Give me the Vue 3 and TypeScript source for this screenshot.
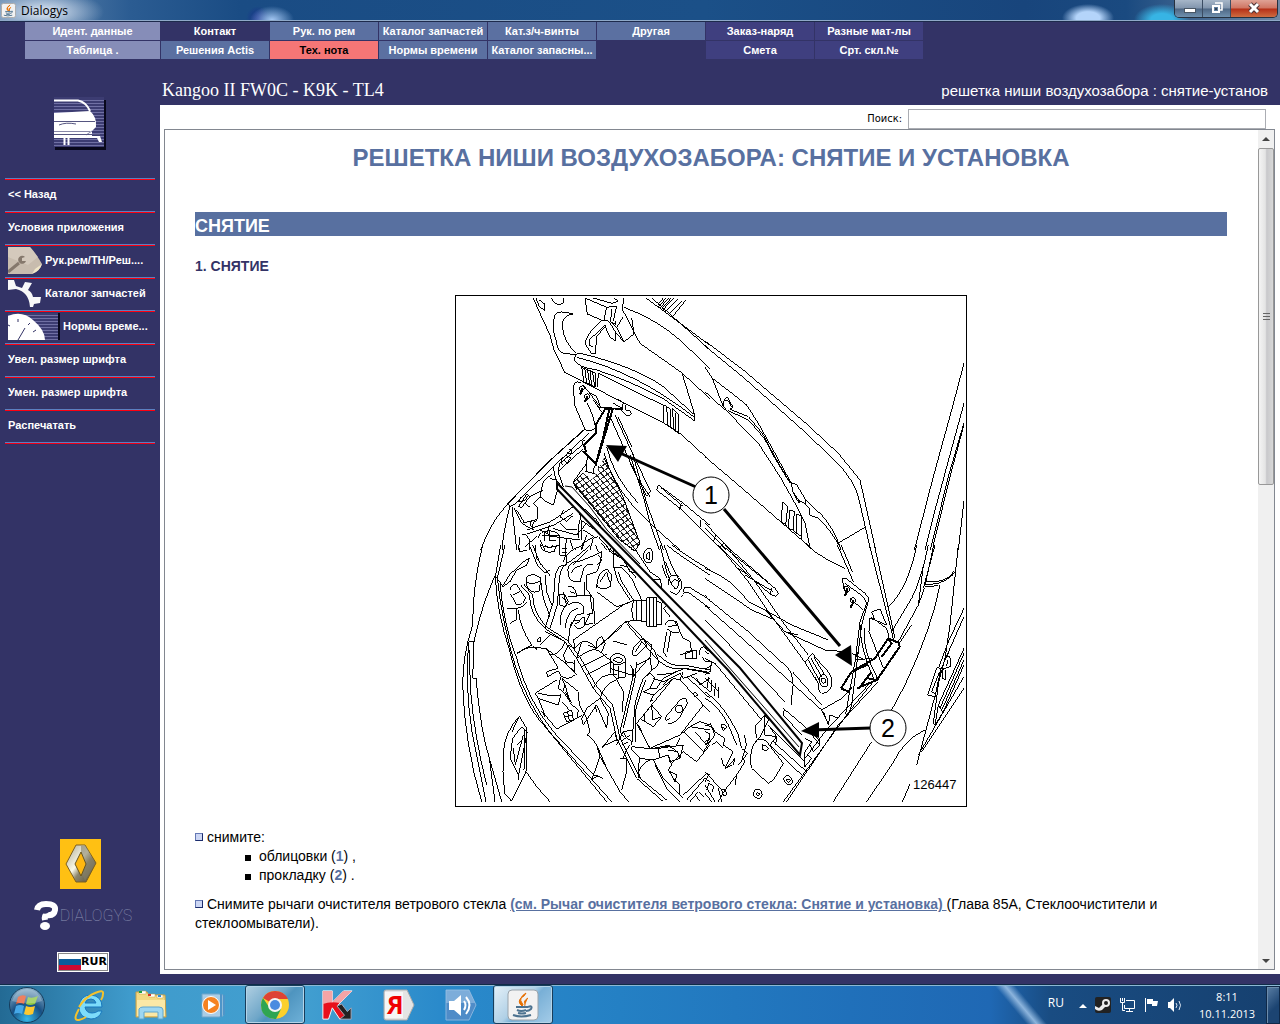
<script setup lang="ts">
import { ref } from 'vue'

interface Tab {
  label: string
  tone: 'pale' | 'navy' | 'steel' | 'alert' | 'indigo' | 'none'
}

interface Tile {
  x: number
  y: number
  thin: string[]
  bold: string[]
}

const tabs: Tab[] = [
  { label: 'Идент. данные', tone: 'pale' },
  { label: 'Контакт', tone: 'navy' },
  { label: 'Рук. по рем', tone: 'steel' },
  { label: 'Каталог запчастей', tone: 'steel' },
  { label: 'Кат.з/ч-винты', tone: 'steel' },
  { label: 'Другая', tone: 'steel' },
  { label: 'Заказ-наряд', tone: 'indigo' },
  { label: 'Разные мат-лы', tone: 'indigo' },
  { label: 'Таблица .', tone: 'pale' },
  { label: 'Решения Actis', tone: 'steel' },
  { label: 'Тех. нота', tone: 'alert' },
  { label: 'Нормы времени', tone: 'steel' },
  { label: 'Каталог запасны...', tone: 'steel' },
  { label: '', tone: 'none' },
  { label: 'Смета', tone: 'indigo' },
  { label: 'Срт. скл.№', tone: 'indigo' },
]

const menu: { label: string; icon?: 'wrench' | 'gear' | 'gauge' }[] = [
  { label: '<< Назад' },
  { label: 'Условия приложения' },
  { label: 'Рук.рем/ТН/Реш....', icon: 'wrench' },
  { label: 'Каталог запчастей', icon: 'gear' },
  { label: 'Нормы време...', icon: 'gauge' },
  { label: 'Увел. размер шрифта' },
  { label: 'Умен. размер шрифта' },
  { label: 'Распечатать' },
]

const query = ref('')

/* Line drawing, split in tiles; path units are a third of a pixel. */
const tiles: Tile[] = [
  {
    x: -5,
    y: -5,
    thin: [
      'M250 24L272 75L300 135L312 180L345 248L362 256L500 328L640 398L690 430L780 512',
      'M258 24L268 50L285 62L284 42L268 30M305 24Q312 44 330 44Q344 40 342 24',
      'M368 72Q325 58 315 75Q303 110 318 150Q322 185 340 190L378 194M368 72Q338 76 337 105Q338 155 380 190',
      'M375 212Q370 190 392 190Q560 232 640 290L735 376L733 392L640 326Q540 272 440 240Q380 230 375 212M380 202Q560 246 733 382',
      'M445 250L640 346L640 398M445 250L442 292M697 252L735 378M395 232L402 276M404 233L410 280M412 236L419 284M420 240L425 288M428 246L434 290L402 276M395 232L438 250L438 292',
      'M642 345L642 400M650 350L654 408M660 355L662 414M667 356L672 420M678 368L678 422M686 374L687 430M642 345L660 356M667 356L686 374M654 408L687 430',
      'M405 24L412 72L458 92M405 24L470 52L500 48M430 24L485 40L505 34L492 24M470 52L462 90M485 56L482 95L498 104L498 94M412 72L432 80M500 48L490 92',
      'M520 24L518 60L570 160L695 248L780 326M522 52Q620 88 690 150L780 236M520 80L500 112L522 156L552 132L545 84M500 112L484 98',
      'M456 90Q410 130 405 160L424 190L436 192L440 140L468 106M466 104L420 148L418 166L430 172M456 90L475 92L498 128L496 152L480 142L464 106M498 128L522 156',
      'M588 24L780 166M606 24L780 180M640 24L622 46M656 24L630 54M672 24L638 60M684 28L646 66M696 32L656 72M708 30L668 80M648 24L626 50M664 24L634 58',
      'M392 278Q374 270 370 290L374 345L405 418Q420 430 437 412L428 376L412 340M400 286L416 306L452 352L518 356L490 340M416 306L440 320L452 352M430 330L455 366',
      'M500 326L520 338L514 362L530 378Q548 376 542 364L528 360L528 344M440 350L520 360',
      'M405 418L300 512L172 640L180 650L192 644M418 428L310 530L192 644M398 422L290 520L168 648M405 450Q394 450 398 464L330 520L324 545L400 476M340 500Q326 520 340 526M350 488L362 492L366 480L356 478M340 510L352 518L362 504L348 496',
      'M310 530L316 565L342 600M324 545L340 590M280 574L270 620Q290 640 310 645L322 602M280 574L306 552M300 566L318 570L322 602',
      'M168 648Q120 700 92 780M180 650Q160 720 156 780M186 652L200 780M192 654L215 700L250 720M205 650L230 612L240 620L215 652ZM240 620L280 600M215 700L262 688L262 652L250 640L270 620M226 640L240 652M214 620L206 636L224 632L236 614',
      'M438 524Q426 535 432 550Q440 560 448 545L446 528M412 500L408 545L432 550M410 520L370 575L380 600',
      'M462 490Q490 600 600 700L690 780M470 470Q490 560 565 640M480 380L520 470L560 560L600 620M495 375L552 500L602 605L590 618L540 520M505 382L545 470M540 495L580 620L600 700L628 780M548 492L590 640L640 780M536 466L550 496',
      'M625 585L700 640L780 706M620 600L690 655L770 735M625 585L620 600M632 592L700 650M694 640L688 660M752 690L750 712',
      'M250 720Q240 700 262 690M230 720L300 696L370 650L388 660L392 690L430 716M230 732L310 706L370 670M300 706Q280 740 312 740L390 750M310 716L380 735L410 700M388 690L384 745M394 690L394 750M270 720L300 735M265 745Q268 722 300 722Q330 726 330 748L330 780M270 750L285 780M275 738H330M284 722V752M300 722V752H318M270 764Q300 780 330 764',
      'M215 735Q228 728 238 750L240 780M225 770L260 740M350 745L345 780M360 750L370 780M430 745L420 780M430 745L445 740L480 780M400 720L432 740L398 760L394 780M340 600L440 690L500 780M410 735L395 780M250 690L240 700L245 712',
      'M200 660L225 700M210 740L205 780M340 660L330 680L350 694L370 676M455 760L470 780M380 770L376 780M330 700L350 720L380 718',
      'M390 290Q398 284 404 292Q402 304 394 304Q388 300 390 290ZM404 314Q412 308 420 316Q418 330 408 328Q400 322 404 314Z',
    ],
    bold: [
      'M465 358L437 405L438 428L402 464L408 484L402 486L438 522L488 358ZM478 358L460 440L438 520',
      'M396 294V302L390 314M412 318V326L403 336',
    ],
  },
  {
    x: 250,
    y: -5,
    thin: [
      'M0 153L115 240L305 402L400 490L465 570L512 780M0 168L115 262L302 428L400 522Q445 570 460 620L497 780',
      'M0 232L22 265L55 350L110 410L160 460L225 560L270 640L300 700L314 770M22 265L75 305L125 345L160 400L210 490L258 578',
      'M55 350Q55 322 68 322L84 352L76 356M60 330Q72 330 80 352M76 358L130 380L172 430L205 492L256 580M70 362L130 390L178 445L208 502L250 572',
      'M258 578L275 584L302 630L300 640L282 632L264 606ZM264 606L282 640M302 630L350 675Q390 720 408 780M300 640L312 655L314 676L340 684Q385 730 400 765M282 632L284 640',
      'M402 758L480 712M0 305L60 360M0 500L115 598L230 698L325 780M233 636L228 696L242 704L248 650ZM254 660L250 716L264 720L268 664ZM276 672L274 730L288 738L290 680ZM242 704L250 716M264 720L274 730M288 738L292 752L312 768',
      'M777 220L740 360L685 560L628 780M777 340L690 660L660 780M777 398L730 560L676 780M777 404L735 560L684 770M777 632L760 780',
      'M0 700L78 780M0 714L64 780M0 728L52 780M32 736L26 752M60 758L46 770',
    ],
    bold: [],
  },
  {
    x: -5,
    y: 250,
    thin: [
      'M98 0Q68 120 68 240Q38 330 38 420Q44 600 95 770M135 92Q95 180 72 290L56 290Q44 420 66 560L108 770M72 290L68 400L78 400Q92 560 118 640L155 770M118 640L135 770M56 290L62 440Q74 580 110 720',
      'M152 0L136 95Q140 200 180 320Q215 470 285 545L470 770M165 0L142 100Q156 230 195 360Q235 480 300 562L485 770M150 112Q160 240 200 340Q235 470 310 560L432 690L460 700M136 95L150 110L158 125',
      'M160 620Q165 560 208 514L230 550L228 680L184 768L164 745Q156 680 160 620M180 640L188 580L215 545L232 560L206 690ZM190 610L196 660L220 570M200 600L212 590M228 680Q260 730 300 770M205 520L186 560M206 690L206 704M224 556L222 676',
      'M158 125L180 110L200 75L230 60L238 40L220 50L178 90L160 120M205 0L210 20L230 16M180 134Q184 114 200 120L226 158Q222 182 200 180L182 148M190 150L210 140M178 190Q215 195 232 170M170 190L200 192L198 225L180 235M205 195Q210 250 245 300L200 325',
      'M230 96Q250 80 272 100L268 138Q240 150 230 120ZM230 112Q250 120 270 108M238 0L262 60L285 85L300 75M248 0L272 60M255 0L260 40L300 92M212 120L238 150Q240 210 285 250L345 290L380 340L430 430L480 490L500 580L540 660L560 700L640 770M220 116L248 150Q250 205 290 246L352 286L392 340L440 425L488 480L510 580L548 655L570 700L650 765',
      'M270 95L280 160L300 215M285 90L290 140L305 180M270 0Q280 28 312 20L320 0M285 0Q300 16 310 0M330 0L330 30L350 34M345 0L350 60M335 12H350M335 22H350M350 60Q320 55 315 100L310 170L285 250M360 50Q335 55 328 100L322 180L300 250M400 0Q345 20 340 50M420 0Q400 20 360 50M415 14L370 58',
      'M355 90Q345 50 390 48Q440 30 455 20Q452 60 440 80L410 90L408 130L430 160L434 236M355 90Q360 115 390 110L400 75Q405 55 430 58M365 85Q368 65 395 62M445 30L455 45L440 60M328 150H345L355 170L345 185L330 180ZM340 140L350 182M336 156L350 170M355 125Q375 120 380 152H405V110M360 140L375 145M355 155L420 150L428 205L410 208',
      'M330 240Q328 180 372 172Q400 172 402 190L402 205L380 210L360 250L355 290M345 250Q350 195 385 190M362 245Q360 225 390 225L402 215L405 238L430 236M372 240Q380 256 400 246L420 208M376 236L390 230M370 285L520 180L545 168L590 168M370 285L375 310L395 290Q420 285 440 310L520 235M380 340L395 290M550 168L545 195L550 225L590 230M520 235L550 225M560 168V226M576 168V228',
      'M590 158H620V244H590ZM600 158V244M612 158V244M620 168L635 175V238L620 240M635 175L650 150M436 0L445 20M440 130Q440 80 470 72L486 90L480 125Q450 140 440 120M450 110L470 80L478 110M440 140L500 185L540 172M490 0L492 70L505 110L540 165M492 68H515L545 100L575 165M505 80L515 110L550 165M510 60L530 65L560 100M470 0L480 20L520 44L540 80L575 85M480 10Q500 40 525 30',
      'M580 40Q580 10 600 10Q614 20 605 50Q590 60 580 40M588 38Q590 22 600 22L598 46ZM550 0L560 20L600 80L630 100M540 0L545 16M630 0L650 80L665 120M642 0L664 60L690 110M636 60L650 100M646 50L662 90M656 120Q650 88 680 90Q700 105 694 130L680 150L660 140M664 116Q668 98 684 108Q690 125 676 132ZM650 0Q700 40 780 90M665 0Q720 40 780 75M700 140Q700 120 720 128L780 165M695 155Q700 140 715 142L780 190M610 102L632 104L636 140',
      'M640 190L660 215M645 240Q650 220 680 230L690 260Q670 270 650 250M655 245L680 240L670 225M650 260L640 320L650 335M662 262L652 320M690 260L700 280L720 290L725 320L690 330M640 190L650 180L664 190M705 340L708 320L740 315L740 340ZM728 315V340M750 330Q745 310 760 305L780 315M756 335L766 350L780 350M765 320L776 326',
      'M440 310Q435 280 455 275L466 295L455 320M520 235L530 228L620 325Q660 370 700 360L780 375M515 245L440 310M530 236L610 330Q650 380 700 370L780 385M490 288L532 300M548 330Q540 310 580 280L590 300L560 332ZM556 320L576 290M580 282L605 300L600 335L545 400',
      'M380 340L395 330Q430 305 450 320L485 350M395 365L470 328M410 390L480 352M430 430Q450 380 500 390M450 460Q460 420 500 404L520 440L518 500M375 310L355 300M415 300L440 312M480 345Q482 326 505 326Q528 330 528 348L525 396L500 400L482 385ZM482 350Q500 368 528 350M490 356L490 390M505 362V398M490 345Q500 330 520 345Q508 360 490 345',
      'M548 370L548 400L510 560L520 575M560 350L555 400L520 550M540 360Q560 380 548 400M480 370L545 390M560 360L600 340L605 375L580 400M605 375Q640 360 615 325M580 400Q560 450 555 480L545 600M588 405Q565 460 556 500L556 590M580 400L600 385L615 400L600 430L580 440',
      'M200 328Q230 295 290 312L325 370L290 380L292 395L325 378L332 390M290 312Q340 345 380 390M262 284Q258 292 270 290Q276 280 270 275ZM285 260L345 290Q330 330 300 330M270 300L300 270M355 300L340 330L350 360L375 380L372 345M345 350L375 355M330 390Q350 410 375 390M332 395L325 430L338 440L345 420L336 400L385 440L388 480L410 520M345 420L360 470L340 440',
      'M320 405L255 445L265 460L325 480L332 450L300 452L265 445M265 460L285 510L320 552L395 512M285 515L275 498M340 505L365 495L370 525L350 530ZM345 515L365 510M352 498L358 528M360 475L385 495L382 515M250 305Q260 310 262 316M335 470L358 495M345 440L365 475',
      'M400 540L395 520L410 490L450 460L475 505L470 550L440 480L400 540M410 520L420 560L412 570L425 580L440 600L450 635L425 705M435 480L440 500M455 610L495 560L500 585L455 605M450 635L490 705L510 740L535 770M425 705L445 690M510 640L528 640L530 680L515 735M500 600L520 560L545 555M520 640Q530 610 540 600M440 600L470 670',
      'M560 535L670 400L690 405L760 480L690 570L600 610ZM660 520Q640 535 648 515L690 465Q710 450 712 475L690 515Q670 540 655 535M675 495Q678 480 690 480Q702 485 696 500Q685 508 675 495M585 505L605 480L635 515L610 545L585 530ZM605 480L608 525L635 515M570 520L585 530M565 540L600 612L660 600M580 440L610 450L670 400M610 450L600 470L610 465M600 430L620 430L640 400L680 380',
      'M620 390L665 385L705 370L770 380M610 400L640 410L690 385L700 400L740 385M640 420L660 400M690 405L700 380M735 440Q725 445 735 455L745 450ZM710 395L780 460M720 390L780 440M740 400L750 420L780 400M760 480L780 500M690 570L720 545L780 555M700 560L760 620L780 590M720 545L750 530L780 540M735 560L770 600L780 570M690 580L680 600',
      'M545 605L610 612L700 600L690 640L660 650L655 630L610 645L570 640L545 615ZM570 640Q560 680 572 700M600 645L590 650Q560 670 565 700M610 645L640 700L700 760M615 660L650 730L690 770M630 640L625 612M640 605Q680 600 690 640M655 615L685 620M655 630L665 660L655 675L670 700L690 720L690 750M665 655L700 620L740 650L780 600M660 680L680 690L675 710ZM700 750L770 685L780 690M710 765L765 700L780 710M720 770L745 740L760 755M735 750L750 768M520 560L530 580L548 590M512 590L540 570M515 600L535 590',
    ],
    bold: [],
  },
  {
    x: 250,
    y: 250,
    thin: [
      'M0 70Q80 100 130 170L180 195L240 260L360 315L420 320M0 100Q90 160 140 195L210 225M180 195L260 240L370 285M240 260L280 270M0 155L130 260L250 370Q270 400 262 440L258 480M0 182L100 270L350 495L410 460M262 380L350 480',
      'M50 0L210 130L220 145L212 154L196 148L130 90L80 40L42 4M60 0L190 112M120 90L205 140M200 128L196 146M40 0L130 110L190 200L300 352M70 10L150 110L240 240L310 330M305 0Q350 40 420 70M80 28L100 40M100 70L130 90',
      'M300 352L322 325L355 365Q385 390 380 420Q375 445 350 445Q338 435 340 415ZM310 345L342 405M318 340L350 395M326 335L358 388M342 405Q345 385 360 390Q375 405 365 425Q348 430 342 405M350 400Q362 396 362 412Q350 422 350 400M335 405L330 395',
      'M397 0L445 110M408 0L442 80M493 0L560 260L565 285M508 0L570 280M412 100L416 130L425 140M412 100L425 102L480 145L492 160L470 240L440 480L430 510L422 508L450 350L465 230L485 175L475 155L420 115M435 160L475 195M468 240Q460 300 510 410M478 250Q470 310 518 402M440 325L480 345M458 320L450 345L500 340',
      'M500 200L525 192L545 240L510 225ZM510 225L495 220L492 260L535 370M498 216L545 250L552 275M635 0Q610 130 550 185M670 0Q650 100 620 160L560 260M686 0Q665 100 660 120L700 115Q740 100 750 80M660 108Q720 120 748 78M620 240L580 300M655 60L640 180L580 290M690 0L655 130',
      'M705 120Q680 250 600 420L560 495M760 0L735 240L720 340L635 660M660 125L700 122M777 190L730 290L700 370M777 215L735 310L705 380L685 535M777 310L700 480L690 540L685 535M777 325L705 490M777 345L712 492M777 360L715 500L690 540M700 480L712 500M777 395L640 630M777 430L650 620',
      'M708 370L695 368L668 450L690 455ZM702 385L680 440L690 446M722 340Q740 320 736 365L718 370M715 370Q705 400 720 405L722 375M728 345L725 362M730 320L728 335M658 130L640 180',
      'M505 410L440 490L235 770M518 412L400 540L245 770M490 420L360 560L300 640M400 520L375 510L370 540L355 500M410 460L430 440M350 495L372 540M500 590L385 770M660 555Q600 580 560 660L485 770M625 695L592 770M560 495L550 510',
      'M0 340L20 350L15 380L0 390M0 310L20 325M20 350L30 355L170 525M0 400L40 440M0 440Q60 480 100 570L110 610M0 460Q40 480 70 540L95 600M10 395L8 430M20 405L18 440M32 415L28 452M42 425L40 460M0 372L18 362',
      'M0 540L20 545L30 570L15 590L0 600M0 560L12 565L14 582L0 590M15 535L30 560L60 580L55 600L85 620L60 670L80 660M20 600L35 590L55 610M50 640L55 660L66 668L90 640L85 660M48 540Q56 532 64 545Q64 556 54 556ZM52 546L60 550M118 570L124 600L112 640L120 650L95 690L60 735L40 770M110 610L128 625L100 660M50 735Q66 730 64 750Q54 760 50 735',
      'M0 680L50 735M10 690L0 710M5 735L12 715L28 725L20 742M0 745L20 770M0 720L30 770M40 730L50 770M95 690L90 720M150 545L180 510L190 525L165 575M150 545L155 580M165 575L145 600Q130 640 140 670L190 715L205 705L235 655L185 590Q165 575 150 590M172 600Q182 596 190 610Q182 622 172 612ZM190 540L215 575L195 600M180 510L180 570L215 575L212 600M195 545L300 650',
      'M195 600L290 690M205 590L305 680M235 490L300 545L345 600L342 585L310 548M238 492L235 510L290 570M300 580L320 590L300 620M310 630L320 640L300 665L298 620M315 600L325 620L345 600M145 750Q145 732 160 732Q175 740 170 755Q158 768 145 750M152 748Q156 738 164 746Q164 758 152 748M236 705Q236 692 250 692Q264 700 262 715Q250 728 236 705M243 706Q248 698 256 706Q254 718 243 706M0 150L5 154M0 225L240 470M110 400L120 410',
      'M418 126Q428 120 434 130Q432 144 422 142Q416 138 418 126ZM436 160Q446 154 454 164Q450 176 440 174Q432 168 436 160Z',
    ],
    bold: [
      'M408 430L440 380L510 340L550 280L572 290L580 290L584 305L540 370L515 405M408 430L430 440L440 425M550 280L560 296L530 335M440 380L490 358M460 432L500 380M456 430L515 405L490 400',
      'M426 130V140L418 154M444 164V174L436 188',
    ],
  },
]
</script>

<template>
  <div class="window">
    <header class="titlebar">
      <svg class="java" viewBox="0 0 32 32" aria-hidden="true">
        <rect x="1" y="1" width="30" height="30" rx="4" fill="#f2f2f2" stroke="#aaa" stroke-width="2" />
        <path d="M19 4Q11 9 15 15L16 17Q10 13 14 9Q18 7 19 4M21 9Q16 12 18 17L17 18" fill="#e76f00" stroke="#e76f00" stroke-width="2" />
        <path d="M9 18H21M21 18Q26 16 24 20Q22 22 19 22M10 21Q14 23 19 21M11 24Q15 25 19 24M6 26Q14 29 24 26" fill="none" stroke="#4d7390" stroke-width="2" />
      </svg>
      <span class="caption">Dialogys</span>
      <div class="controls">
        <button type="button" aria-label="Свернуть"><svg viewBox="0 0 28 17"><rect x="9.500" y="8.500" width="11" height="4" fill="#fff" stroke="#4a5866" /></svg></button>
        <button type="button" aria-label="Восстановить"><svg viewBox="0 0 28 17"><path d="M12 3H19V10H17" fill="none" stroke="#fff" stroke-width="1.500" /><path d="M10 6H16V12H10Z" fill="#5f7f9f" stroke="#fff" stroke-width="2" /><rect x="12" y="8" width="2" height="2" fill="#354558" /></svg></button>
        <button type="button" class="close" aria-label="Закрыть"><svg viewBox="0 0 28 17"><path d="M10 4L18 12M18 4L10 12" stroke="#4d3437" stroke-width="5" /><path d="M10 4L18 12M18 4L10 12" stroke="#fff" stroke-width="3" /></svg></button>
      </div>
    </header>

    <nav class="tabs" aria-label="Разделы">
      <template v-for="(tab, i) in tabs" :key="i">
        <button v-if="tab.label" type="button" :class="['tab', tab.tone]">{{ tab.label }}</button>
        <span v-else></span>
      </template>
    </nav>

    <div class="body">
      <aside class="side">
        <svg class="carlogo" viewBox="0 0 52 53" aria-hidden="true">
          <path d="M1 51.500H51V3" fill="none" stroke="#08081c" stroke-width="3" />
          <rect width="50" height="50" fill="#3c3c72" />
          <path v-for="n in 16" :key="n" :d="`M0 ${n * 3 + 0.5}H50`" stroke="#7070a4" />
          <path d="M0 3.500H24Q32 5 36 14" fill="none" stroke="#fff" stroke-width="2" />
          <path d="M0 16L36 14Q43 20 42 30L38 34V39H0ZM0 39H46L48 45H45L43 41H0Z" fill="#fff" />
          <path d="M0 24.500H41M5 28Q12 25 22 27" fill="none" stroke="#555580" />
          <path d="M0 34.500H36M32 38L38 34" stroke="#8888a8" />
          <path d="M0 37.500H46" stroke="#555580" />
          <path d="M10.500 41V48M14.500 41V48" stroke="#fff" stroke-width="2" />
        </svg>

        <ul class="menu">
          <li v-for="item in menu" :key="item.label">
            <button type="button">
              <svg v-if="item.icon === 'wrench'" class="pic" viewBox="0 0 34 27" aria-hidden="true">
                <path d="M0 0H22Q27 5 34 17Q32 24 24 27H0Z" fill="#c8bcae" />
                <path d="M0 0H22L30 10L20 18L0 10Z" fill="#d8cec2" opacity=".7" />
                <path d="M34 17Q32 24 24 27L27 22Z" fill="#f0e6c8" />
                <path d="M0 25L11 16" stroke="#85786c" stroke-width="3" />
                <path d="M17 10A4 4 0 1 0 18 14L14 14L14 11Z" fill="#85786c" />
              </svg>
              <svg v-else-if="item.icon === 'gear'" class="pic" viewBox="0 0 34 27" aria-hidden="true">
                <path d="M0 0H6L8 6L14 8L17 2L24 3L20 10Q24 12 25 17L33 17L32 23L26 24L25 27H22Q21 12 8 9L0 10Z" fill="#f8f8f8" />
              </svg>
              <svg v-else-if="item.icon === 'gauge'" class="dial" viewBox="0 0 52 27" aria-hidden="true">
                <rect width="51" height="27" fill="#3c3c72" />
                <path v-for="n in 9" :key="n" :d="`M0 ${n * 3 - 0.5}H50`" stroke="#7070a4" />
                <path d="M0 3Q14-3 25 7Q37 17 37 27H0Z" fill="#fff" />
                <path d="M10 27L17 15M10 6V9M0 12L2 13M22 10L20 12M28 17L25 19" stroke="#333366" />
                <path d="M51 0V27" stroke="#08081c" stroke-width="2" />
              </svg>
              <span>{{ item.label }}</span>
            </button>
          </li>
        </ul>

        <div class="brand">
          <svg class="renault" viewBox="0 0 41 50" aria-hidden="true">
            <defs>
              <linearGradient id="metal" x1="0" y1="0" x2="1" y2="1">
                <stop offset="0" stop-color="#a8a490" /><stop offset=".45" stop-color="#fbfae8" /><stop offset=".6" stop-color="#8c866c" /><stop offset="1" stop-color="#4c4634" />
              </linearGradient>
            </defs>
            <rect width="41" height="50" fill="#ffc013" />
            <path d="M16 6H25L36 24L26 43H16L6 25Z" fill="url(#metal)" stroke="#7c6020" />
            <path d="M21 7V13L26 25L22 34L25 42L35 25L26 7" fill="#847e68" opacity=".6" />
            <path d="M21 13L26 25L21 37L15 25Z" fill="#ffb810" stroke="#665520" />
          </svg>
          <div class="dialogys">
            <svg viewBox="0 0 26 29" aria-hidden="true">
              <path d="M3 9Q4 3 12 3Q22 3 21 9Q20 15 13 14Q10 14 11 19" fill="none" stroke="#fff" stroke-width="6" />
              <path d="M8 12Q12 14 15 11L17 7Q12 5 9 8" fill="#333366" />
              <ellipse cx="11" cy="25" rx="5" ry="4" fill="#fff" />
            </svg>
            <span>DIALOGYS</span>
          </div>
          <button type="button" class="currency"><span class="flag" aria-hidden="true"></span>RUR</button>
        </div>
      </aside>

      <div class="main">
        <div class="vehicle">
          <h1>Kangoo II FW0C - K9K - TL4</h1>
          <p>решетка ниши воздухозабора : снятие-установ</p>
        </div>
        <div class="sheet">
          <form class="search" @submit.prevent>
            <label for="q">Поиск:</label>
            <input id="q" v-model="query" type="text" />
          </form>
          <div class="frame">
            <article>
              <h2>РЕШЕТКА НИШИ ВОЗДУХОЗАБОРА: СНЯТИЕ И УСТАНОВКА</h2>
              <h3>СНЯТИЕ</h3>
              <h4>1. СНЯТИЕ</h4>
              <svg class="figure" viewBox="0 0 512 512" role="img" aria-label="126447">
                <defs>
                  <clipPath id="grille">
                    <path d="M128 178L138 184L149 163L168 202L185 248L180 256L165 245L118 188Z" />
                  </clipPath>
                </defs>
                <g v-for="(tile, t) in tiles" :key="t" :transform="`translate(${tile.x} ${tile.y}) scale(.33333)`" class="tile">
                  <path v-for="(d, i) in tile.thin" :key="`t${i}`" :d="d" />
                  <path v-for="(d, i) in tile.bold" :key="`b${i}`" :d="d" class="bold" />
                </g>
                <g class="grille" clip-path="url(#grille)">
                  <rect x="110" y="160" width="80" height="100" fill="#fff" />
                  <path v-for="n in 28" :key="`u${n}`" :d="`M100 ${n * 7 + 60}L200 ${n * 7 + 180}`" />
                  <path v-for="n in 30" :key="`d${n}`" :d="`M100 ${n * 6 + 150}L200 ${n * 6 + 80}`" />
                </g>
                <path d="M128 178L118 188L165 245L180 256L185 248L168 202L149 163" fill="none" stroke="#000" class="crisp" />
                <path d="M102 188L285 373L347 448L345 460L273 375L102 194Z" class="seal" />
                <path d="M250 345L344 452M110 191L117 192L135 212L152 235L185 269" class="crease" />
                <path d="M241 192L165 158M269 214L385 351M416 433L356 435" class="lead" />
                <path d="M151 150L172 151L163 167ZM397 371L380 360L396 350ZM346 436L364 427L364 443Z" />
                <circle cx="256" cy="200" r="18" class="mark" />
                <circle cx="433" cy="433" r="18" class="mark" />
                <text x="256" y="209" class="num">1</text>
                <text x="433" y="442" class="num">2</text>
                <rect x="455" y="481" width="50" height="16" fill="#fff" />
                <text x="458" y="494" class="ref">126447</text>
                <rect x=".5" y=".5" width="511" height="511" fill="none" stroke="#000" />
              </svg>
              <p class="step"><i class="box"></i>снимите:</p>
              <ul class="parts">
                <li>облицовки (<b>1</b>) ,</li>
                <li>прокладку (<b>2</b>) .</li>
              </ul>
              <p class="step last"><i class="box"></i>Снимите рычаги очистителя ветрового стекла <a href="#wiper">(см. Рычаг очистителя ветрового стекла: Снятие и установка) </a>(Глава 85A, Стеклоочистители и стеклоомыватели).</p>
            </article>
            <div class="scroll" aria-hidden="true">
              <svg viewBox="0 0 16 18"><path d="M4 11H12L8 7Z" fill="#444" /></svg>
              <div class="track"><div class="thumb"></div></div>
              <svg viewBox="0 0 16 18"><path d="M4 8H12L8 12Z" fill="#444" /></svg>
            </div>
          </div>
        </div>
      </div>
    </div>

    <footer class="taskbar">
      <button type="button" class="start" aria-label="Пуск">
        <svg viewBox="0 0 38 38">
          <defs><radialGradient id="orb" cx=".5" cy=".9" r=".9"><stop offset="0" stop-color="#35b8e8" /><stop offset=".5" stop-color="#174f83" /><stop offset="1" stop-color="#8fb4cc" /></radialGradient></defs>
          <circle cx="19" cy="19" r="17.500" fill="url(#orb)" stroke="#153c5c" />
          <path d="M10 11Q14 8 18 10L16 18Q12 16 8 18Z" fill="#e8562a" />
          <path d="M20 11Q24 13 30 10L27 18Q22 20 18 18Z" fill="#8cc63e" />
          <path d="M8 20Q12 18 16 20L14 28Q10 26 6 28Z" fill="#46a8e8" />
          <path d="M18 20Q22 22 27 20L25 28Q20 30 16 28Z" fill="#fdc82f" />
          <path d="M4 15Q8 3 19 3Q30 3 34 15Q20 20 4 15" fill="#fff" opacity=".25" />
        </svg>
      </button>
      <button type="button" class="app" aria-label="Internet Explorer">
        <svg viewBox="0 0 32 32"><path d="M29 18H12Q13 24 19 24Q23 24 25 22H29Q26 30 18 30Q6 29 6 18Q7 6 18 6Q29 7 29 18M12 14H23Q22 10 18 10Q13 10 12 14" fill="#7ddcfa" stroke="#1878be" fill-rule="evenodd" /><path d="M6 20Q-1 32 6 31Q10 30 13 28M6 18Q12 8 22 4Q31 0 30 5Q30 8 28 11" fill="none" stroke="#f5c22c" stroke-width="2" /></svg>
      </button>
      <button type="button" class="app" aria-label="Проводник">
        <svg viewBox="0 0 32 32"><path d="M1 3H12L14 6H30L31 28H1Z" fill="#f3d983" stroke="#c9a046" /><path d="M4 2H11V5H4ZM14 5H20V8H14ZM22 6H28V9H22Z" fill="#fff" stroke="#c9a046" stroke-width=".5" /><path d="M4 2H7V4H4Z" fill="#1ba041" /><path d="M13 5H16V7H13Z" fill="#d6352b" /><path d="M23 6H26V8H23Z" fill="#2c8fdd" /><path d="M2 11H30V27H2Z" fill="#fbe8a6" /><path d="M4 30V20Q5 18 8 18H24Q28 18 28 21V30H23V23H9V30Z" fill="#9ed7f2" stroke="#5ea6cf" /></svg>
      </button>
      <button type="button" class="app" aria-label="Проигрыватель">
        <svg viewBox="0 0 32 32"><path d="M5 5H22L26 6V27L22 28H5Z" fill="#a9cde6" stroke="#6fa5ca" /><path d="M24 5V28M27 6V26" stroke="#4e95c9" stroke-width="2" /><circle cx="14" cy="16" r="8.500" fill="#f58220" stroke="#fff" /><path d="M11 11V21L19 16Z" fill="#fff" /></svg>
      </button>
      <button type="button" class="app active" aria-label="Chrome">
        <svg viewBox="0 0 32 32"><circle cx="16" cy="16" r="14" fill="#fbd02c" /><path d="M16 16L4 9Q8 2 16 2Q25 2 29 10H16Z" fill="#dd4335" /><path d="M4 9L12 21L16 16L16 30Q2 29 2 16Q2 12 4 9" fill="#2fa552" /><path d="M17 30L22 20L15 22L12 21L16 30Z" fill="#2fa552" /><circle cx="16" cy="16" r="7" fill="#f4f4f4" /><circle cx="16" cy="16" r="5" fill="#4a8be0" /></svg>
      </button>
      <button type="button" class="app" aria-label="Kaspersky">
        <svg viewBox="0 0 34 34"><path d="M2 2H12V14L24 2H33L18 17L27 29L20 32L12 20L8 32H2Z" fill="#e8101c" stroke="#fff" /><path d="M2 2H12V14L24 2H33L20 15Q10 13 2 16Z" fill="#f4a4a6" /><path d="M17 18L22 16L28 24L32 20V32H20L25 28Z" fill="#222" stroke="#aab" /></svg>
      </button>
      <button type="button" class="app" aria-label="Яндекс">
        <svg viewBox="0 0 32 32"><path d="M3 1H24L31 16L24 31H3Q1 31 1 29V3Q1 1 3 1" fill="#e4e4e4" stroke="#aaa" /><path d="M2 3H20V29H2Z" fill="#f6f6f6" /><text x="4" y="25" class="ya">Я</text></svg>
      </button>
      <button type="button" class="app" aria-label="Звук">
        <svg viewBox="0 0 32 32"><path d="M1 1H24L31 16L24 31H1Z" fill="#4f8cc8" stroke="#86b4dd" /><path d="M1 1H24L30 14H1Z" fill="#9cc3e6" opacity=".6" /><path d="M4 12H9L16 6V27L9 21H4Z" fill="#fff" /><path d="M19 12Q22 16 19 21M21 8Q28 16 21 25" fill="none" stroke="#fff" stroke-width="2" /></svg>
      </button>
      <button type="button" class="app active lit" aria-label="Java">
        <svg viewBox="0 0 32 32"><rect x="1" y="1" width="30" height="30" rx="4" fill="#f2f2f2" stroke="#9aa4ac" /><path d="M19 4Q11 9 15 14Q17 16 15 17Q10 13 14 9Q18 7 19 4M21 9Q16 12 18 15Q18 17 17 18" fill="#e76f00" stroke="#e76f00" /><path d="M9 18H21M21 18Q26 16 24 20Q22 22 19 22M10 21Q14 23 19 21M11 24Q15 25 19 24M6 26Q14 29 24 26" fill="none" stroke="#4d7390" stroke-width="2" /></svg>
      </button>
      <div class="tray">
        <span class="lang">RU</span>
        <svg width="8" height="16" viewBox="0 0 8 16" aria-hidden="true"><path d="M0 11H8L4 7Z" fill="#fff" /></svg>
        <svg width="16" height="16" viewBox="0 0 16 16" aria-hidden="true"><rect width="16" height="16" rx="2" fill="#222" /><circle cx="11" cy="6" r="3" fill="#222" stroke="#eee" stroke-width="2" /><path d="M0 9L4 11L8 7L11 9L7 13Q3 15 0 12Z" fill="#eee" /></svg>
        <svg width="16" height="16" viewBox="0 0 16 16" aria-hidden="true"><path d="M7 3.500H15.500V11.500H5.500V8M7 14.500H14M10.500 12V14M1.500 1V5.500H5.500V1M3.500 1V4M3.500 6V13.500H6" fill="none" stroke="#fff" /></svg>
        <svg width="16" height="16" viewBox="0 0 16 16" aria-hidden="true"><path d="M2.500 1V15" stroke="#fff" /><path d="M4 2H10V4H15L14 9H9V7H4Z" fill="#fff" /></svg>
        <svg width="16" height="16" viewBox="0 0 16 16" aria-hidden="true"><path d="M1 5H3L7 1V15L3 11H1Z" fill="#fff" /><path d="M9 6Q11 8 9 11M12 4Q15 8 12 13" fill="none" stroke="#dde8f4" /></svg>
        <time class="clock"><span>8:11</span><span>10.11.2013</span></time>
      </div>
      <button type="button" class="desk" aria-label="Показать рабочий стол"></button>
    </footer>
  </div>
</template>

<style>
body {
  background: #333366;
}
</style>

<style scoped>
.window {
  min-height: 100vh;
  display: flex;
  flex-direction: column;
  background: #333366;
  font-family: 'Liberation Sans', Arial, sans-serif;
  color: #fff;
}
.window *,
.window {
  box-sizing: border-box;
}
button {
  margin: 0;
  padding: 0;
  border: 0;
  background: none;
  color: inherit;
  font: inherit;
}
h1, h2, h3, h4, p, ul {
  margin: 0;
  padding: 0;
  font-weight: normal;
}
svg {
  display: block;
  flex: none;
}

.titlebar {
  height: 22px;
  display: flex;
  align-items: center;
  padding: 0 2px 0 1px;
  border-bottom: 1px solid #1d2a4c;
  box-shadow: inset 0 -1px #8fa9c8;
  background:
    radial-gradient(ellipse 60px 22px at 44px 12px, #c4d3e6 20%, transparent),
    radial-gradient(ellipse 22px 14px at 272px 20px, #a5c8f4, transparent),
    radial-gradient(ellipse 12px 12px at 258px 18px, #17308c, transparent),
    radial-gradient(ellipse 26px 14px at 1088px 18px, #b4d4fa 45%, transparent),
    radial-gradient(ellipse 28px 16px at 1162px 20px, #37b4e4 40%, transparent),
    linear-gradient(90deg, #6c8fb4, #2b5c92 130px, #1a4c84 240px, #1b5088 55%, #18457c 80%, #1a4a80 88%, #7088a4);
}
.java {
  width: 15px;
  height: 15px;
}
.caption {
  margin-left: 5px;
  font: 12px/20px 'Open Sans', 'Noto Sans', sans-serif;
  color: #000;
}
.controls {
  margin-left: auto;
  align-self: flex-start;
  display: flex;
  border: 1px solid #26313f;
  border-top: 0;
  border-radius: 0 0 5px 5px;
  overflow: hidden;
}
.controls button {
  width: 28px;
  height: 17px;
  border-right: 1px solid #3b4d63;
  background: linear-gradient(#a6b6c8, #8195ad 48%, #4e6784 52%, #6f90ae);
}
.controls svg {
  width: 28px;
  height: 17px;
  margin: 0 auto;
}
.controls .close {
  width: 46px;
  border: 0;
  background: linear-gradient(#dfa295, #cf7461 48%, #b52f17 52%, #cf6c40);
}

.tabs {
  display: grid;
  grid-template-columns: 135px repeat(7, 108px);
  gap: 1px;
  padding-left: 25px;
}
.tab {
  height: 18px;
  padding-top: 1px;
  overflow: hidden;
  font-size: 11px;
  line-height: 17px;
  font-weight: bold;
  text-align: center;
  white-space: nowrap;
}
.pale { background: #868db8; }
.steel { background: #5b70a1; }
.navy { background: #333366; }
.indigo { background: #3f3f7f; }
.alert { background: #f67676; color: #000; }

.body {
  flex: 1;
  display: flex;
}
.side {
  flex: none;
  width: 160px;
  display: flex;
  flex-direction: column;
  padding: 38px 5px 12px;
}
.carlogo {
  width: 52px;
  height: 53px;
  margin-left: 49px;
}
.menu {
  margin-top: 28px;
  list-style: none;
  border-bottom: 1px solid #5b7fc0;
  box-shadow: 0 1px #f00018;
}
.menu li {
  height: 33px;
  border-top: 1px solid #5b7fc0;
  box-shadow: inset 0 1px #ff0010;
}
.menu button {
  width: 100%;
  height: 30px;
  display: flex;
  align-items: center;
  gap: 3px;
  padding-left: 3px;
  font-size: 11px;
  font-weight: bold;
  text-align: left;
  white-space: nowrap;
}
.pic {
  width: 34px;
  height: 27px;
}
.dial {
  width: 52px;
  height: 27px;
}
.brand {
  margin-top: auto;
  display: flex;
  flex-direction: column;
  align-items: center;
}
.renault {
  width: 41px;
  height: 50px;
}
.dialogys {
  margin: 12px 0 22px 6px;
  display: flex;
  align-items: center;
  color: #8f93b4;
  font: 100 16px/29px 'Roboto', sans-serif;
}
.dialogys svg {
  width: 26px;
  height: 29px;
}
.currency {
  width: 52px;
  height: 20px;
  display: flex;
  align-items: center;
  margin-left: 6px;
  padding-left: 1px;
  background: #fff;
  border: 1px solid #fff;
  box-shadow: inset 0 0 0 1px #888;
  color: #000;
  font: bold 11px/18px 'DejaVu Sans', sans-serif;
}
.flag {
  width: 22px;
  height: 15px;
  background: linear-gradient(#fff 4px, #0a5c9c 4px 10px, #cc0a33 10px);
}

.main {
  flex: 1;
  min-width: 0;
  display: flex;
  flex-direction: column;
  padding-bottom: 10px;
}
.vehicle {
  height: 46px;
  display: flex;
  justify-content: space-between;
  align-items: flex-end;
  padding: 0 12px 4px 2px;
  line-height: 20px;
  white-space: nowrap;
}
.vehicle h1 {
  font: 18px/22px 'Liberation Serif', 'Times New Roman', serif;
}
.vehicle p {
  font-size: 15px;
}
.sheet {
  flex: 1;
  display: flex;
  flex-direction: column;
  padding: 4px 5px 4px 4px;
  background: #fff;
  color: #000;
}
.search {
  display: flex;
  justify-content: flex-end;
  align-items: center;
  gap: 6px;
  padding-right: 9px;
  font: 11px/20px 'DejaVu Sans Condensed', 'DejaVu Sans', sans-serif;
}
.search input {
  width: 358px;
  height: 20px;
  padding: 0 4px;
  border: 1px solid #abadb3;
  background: #fff;
  font: inherit;
}
.frame {
  flex: 1;
  display: flex;
  border: 1px solid #828790;
}
article {
  flex: 1;
  min-width: 0;
  padding: 14px 31px 36px 30px;
  font-size: 14px;
  line-height: 19px;
}
h2 {
  color: #5870a0;
  font-size: 24px;
  line-height: 28px;
  font-weight: bold;
  text-align: center;
}
h3 {
  margin-top: 40px;
  background: #5870a0;
  color: #fff;
  font-size: 18px;
  line-height: 24px;
  padding-top: 2px;
  height: 24px;
  font-weight: bold;
}
h4 {
  margin-top: 20px;
  color: #333366;
  font-size: 14px;
  line-height: 20px;
  font-weight: bold;
}
.figure {
  width: 512px;
  max-width: 100%;
  margin: 19px auto 21px;
}
.tile path {
  fill: none;
  stroke: #000;
  stroke-width: 3;
  shape-rendering: crispEdges;
}
.tile .bold {
  stroke-width: 6;
}
.grille path {
  stroke: #222;
  shape-rendering: crispEdges;
}
.crisp {
  shape-rendering: crispEdges;
}
.seal {
  fill: #fff;
  stroke: #000;
  stroke-width: 2;
}
.crease {
  fill: none;
  stroke: #000;
}
.lead {
  stroke: #000;
  stroke-width: 3;
}
.mark {
  fill: #fff;
  stroke: #000;
}
.num {
  font-size: 25px;
  text-anchor: middle;
}
.ref {
  font-size: 13px;
}
.box {
  display: inline-block;
  width: 8px;
  height: 8px;
  margin-right: 4px;
  vertical-align: 1px;
  border: 1px solid #6478b4;
  border-right-color: #1c2c6c;
  border-bottom-color: #1c2c6c;
  background: #ccd6f4;
}
.parts {
  list-style: none;
  padding-left: 50px;
}
.parts li {
  display: flex;
  align-items: center;
  white-space: pre;
}
.parts li::before {
  content: '';
  width: 6px;
  height: 6px;
  margin: 2px 8px 0 0;
  background: #000;
}
.parts b,
.step a {
  color: #5870a0;
  font-weight: bold;
}
.last {
  margin-top: 10px;
}
.scroll {
  flex: none;
  width: 16px;
  display: flex;
  flex-direction: column;
  background: #f0f0f0;
}
.scroll svg {
  width: 16px;
  height: 18px;
}
.track {
  flex: 1;
}
.thumb {
  height: 42%;
  border: 1px solid #989898;
  border-radius: 2px;
  background:
    repeating-linear-gradient(#666 0 1px, transparent 1px 3px) center / 7px 8px no-repeat,
    linear-gradient(90deg, #f4f4f4, #e4e4e4 45%, #c8c8cb 55%, #d8d8d8);
}

.taskbar {
  height: 40px;
  display: flex;
  align-items: center;
  gap: 2px;
  border-top: 1px solid #102c48;
  box-shadow: inset 0 1px #8cb8d4;
  background:
    linear-gradient(50deg, transparent 38%, #8cb4dc 48%, transparent 58%) 988px 0 / 70px 40px no-repeat,
    linear-gradient(90deg, #236a94, #3f9bcc 130px, #429fd0 300px, #2a8acb 440px, #2480c4 620px, #2070ba 850px, #1f68b4 990px, #194c82 1050px, #16406f);
}
.start {
  width: 57px;
  height: 38px;
}
.start svg {
  width: 38px;
  height: 38px;
  margin-left: 8px;
}
.app {
  width: 60px;
  height: 39px;
  border: 1px solid transparent;
}
.app svg {
  width: 32px;
  height: 32px;
  margin: 0 auto;
}
.active {
  border-color: #173d5c;
  border-radius: 3px;
  box-shadow: inset 0 0 0 1px #b4d4e8;
  background: linear-gradient(135deg, #b0cfe2, #6ea6c8 45%, #4e94bf 55%, #6fb1d8);
}
.lit {
  background: linear-gradient(135deg, #e4f0f8, #b0d0e6 45%, #78afd6 55%, #a4cce8);
}
.ya {
  font: bold 25px 'Open Sans', 'Noto Sans', sans-serif;
  fill: #f00000;
}
.tray {
  margin-left: auto;
  display: flex;
  align-items: center;
  gap: 8px;
  font: 11px/17px 'Open Sans', 'Noto Sans', sans-serif;
}
.lang {
  margin: 0 7px 4px 0;
  font-size: 12px;
}
.clock {
  display: flex;
  flex-direction: column;
  width: 64px;
  margin-left: 4px;
  text-align: center;
}
.desk {
  width: 14px;
  height: 38px;
  margin-left: 5px;
  border: 1px solid #0e2848;
  box-shadow: inset 1px 1px #6c8cac;
  background: linear-gradient(135deg, #5a7ea4, #1c4472 60%);
}
</style>
